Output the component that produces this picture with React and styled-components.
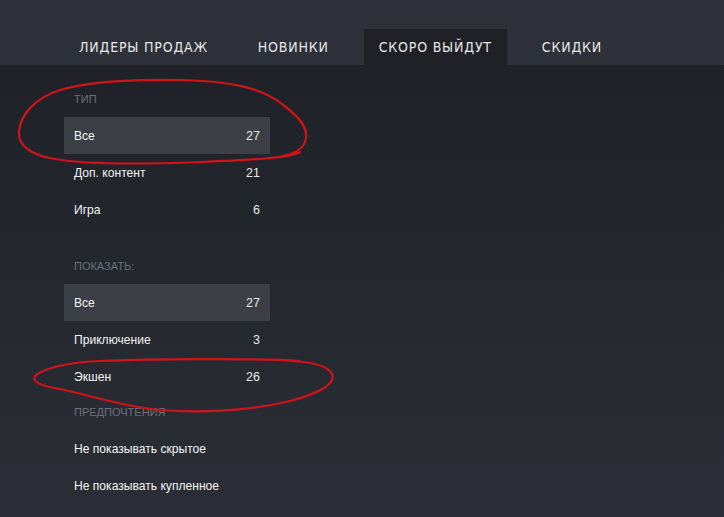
import styled, { createGlobalStyle } from "styled-components";

const GlobalStyle = createGlobalStyle`
  html, body {
    margin: 0;
    padding: 0;
    background: #23262d;
  }
  body {
    font-family: Arial, "Liberation Sans", sans-serif;
  }
`;

const Style = {
  Page: styled.div`
    position: relative;
    width: 724px;
    height: 517px;
    overflow: hidden;
    background: linear-gradient(to bottom, #1e2026 0%, #2b2e36 100%);
  `,
  Header: styled.div`
    height: 65px;
    background: #2e3139;
    display: flex;
    align-items: flex-end;
    padding-left: 64px;
    gap: 20px;
    box-sizing: border-box;
  `,
  Tab: styled.div`
    height: 36px;
    padding: 0 15px;
    display: flex;
    align-items: center;
    font-family: "Liberation Sans Narrow", "DejaVu Sans Condensed", "Liberation Sans", sans-serif;
    font-stretch: condensed;
    font-size: 14px;
    letter-spacing: 0.8px;
    text-transform: uppercase;
    color: #e6e6e6;
    background: ${({ $active }) => ($active ? "#1f2126" : "transparent")};
  `,
  Sidebar: styled.div`
    width: 206px;
    margin-left: 64px;
    display: flex;
    flex-direction: column;
  `,
  SectionTitle: styled.div`
    padding: ${({ $top }) => $top}px 10px 11px;
    font-size: 11px;
    line-height: 14px;
    color: #6c717c;
    text-transform: uppercase;
  `,
  Row: styled.div`
    height: 37px;
    padding: 0 10px;
    display: flex;
    align-items: center;
    justify-content: space-between;
    font-size: 12.1px;
    color: #f4f4f4;
    background: ${({ $selected }) => ($selected ? "#3c3f46" : "transparent")};
  `,
  Count: styled.span`
    font-size: 12.5px;
    color: #e8e8e8;
  `,
  Marks: styled.svg`
    position: absolute;
    left: 0;
    top: 0;
    pointer-events: none;
  `,
};

const tabs = [
  { label: "Лидеры продаж" },
  { label: "Новинки" },
  { label: "Скоро выйдут", active: true },
  { label: "Скидки" },
];

const sections = [
  {
    title: "Тип",
    top: 27,
    rows: [
      { name: "Все", count: 27, selected: true },
      { name: "Доп. контент", count: 21 },
      { name: "Игра", count: 6 },
    ],
  },
  {
    title: "Показать:",
    top: 31,
    rows: [
      { name: "Все", count: 27, selected: true },
      { name: "Приключение", count: 3 },
      { name: "Экшен", count: 26 },
    ],
  },
  {
    title: "Предпочтения",
    top: 10,
    rows: [
      { name: "Не показывать скрытое" },
      { name: "Не показывать купленное" },
    ],
  },
];

function App() {
  return (
    <>
      <GlobalStyle />
      <Style.Page>
        <Style.Header>
          {tabs.map((t) => (
            <Style.Tab key={t.label} $active={t.active}>
              {t.label}
            </Style.Tab>
          ))}
        </Style.Header>

        <Style.Sidebar>
          {sections.map((s) => (
            <div key={s.title}>
              <Style.SectionTitle $top={s.top}>{s.title}</Style.SectionTitle>
              {s.rows.map((r) => (
                <Style.Row key={r.name} $selected={r.selected}>
                  <span>{r.name}</span>
                  {r.count !== undefined && <Style.Count>{r.count}</Style.Count>}
                </Style.Row>
              ))}
            </div>
          ))}
        </Style.Sidebar>

        {/* hand-drawn red marks over the screenshot */}
        <Style.Marks width="724" height="517" viewBox="0 0 724 517">
          <g fill="none" stroke="#d2141a" strokeWidth="2.2" strokeLinecap="round" strokeLinejoin="round">
            <path d="M300 152 C 290 158 250 160 200 162 C 150 164 90 165 55 159 C 30 155 18 145 19 132 C 20 115 35 98 60 90 C 90 81 130 79 180 80 C 230 81 262 88 282 104 C 298 116 310 128 305 142 C 302 150 290 156 270 158" />
            <path d="M300 361 C 250 358 150 359 100 361 C 70 362 45 368 36 375 C 30 381 40 386 60 389 C 90 395 120 406 160 410 C 200 413 250 411 290 401 C 320 393 336 384 332 374 C 328 366 315 362 290 361" />
          </g>
        </Style.Marks>
      </Style.Page>
    </>
  );
}

export default App;
